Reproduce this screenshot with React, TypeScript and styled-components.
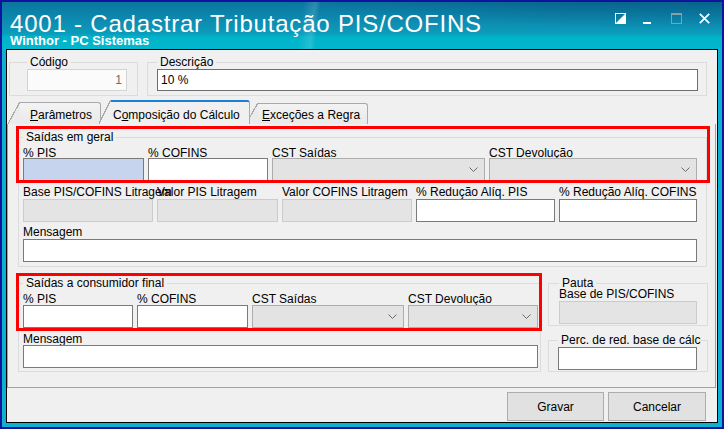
import React from 'react';
import styled, { createGlobalStyle } from 'styled-components';

const GlobalStyle = createGlobalStyle`
  html, body {
    margin: 0;
    padding: 0;
    background: #ffffff;
  }
  body {
    font-family: 'Liberation Sans', Arial, sans-serif;
    font-size: 12px;
    color: #000000;
  }
  *, *::before, *::after {
    box-sizing: border-box;
  }
`;

const Window = styled.div`
  width: 724px;
  height: 429px;
  display: flex;
  flex-direction: column;
  border: 2px solid #10149c;
  background: #0db0d0;
  overflow: hidden;
`;

const TitleBar = styled.header`
  flex: none;
  height: 47px;
  display: flex;
  justify-content: space-between;
  align-items: flex-start;
  padding: 10px 12px 0 8px;
  color: #ffffff;
  background:
    radial-gradient(circle at 118% 190%, transparent 63%, rgba(255, 255, 255, 0.14) 63.6%, transparent 65%),
    radial-gradient(120% 170% at 100% -35%, rgba(3, 60, 100, 0.55) 0%, rgba(3, 60, 100, 0) 55%),
    linear-gradient(180deg, #0b76a0 0%, #0d8bb0 40%, #0a9dbd 68%, #00b3ca 74%, #00b7cd 100%);
`;

const TitleBlock = styled.div`
  display: flex;
  flex-direction: column;
`;

const Title = styled.h1`
  margin: 0;
  font-family: 'Liberation Sans', Arial, sans-serif;
  font-weight: normal;
  font-size: 24px;
  line-height: 24px;
  letter-spacing: 0.8px;
  white-space: nowrap;
`;

const Subtitle = styled.div`
  margin-top: -2px;
  font-weight: bold;
  font-size: 13px;
  line-height: 13px;
  white-space: nowrap;
`;

const Controls = styled.div`
  display: flex;
  align-items: flex-start;
  margin-top: 1px;
`;

const ControlIcon = styled.svg<{ $ml: number }>`
  display: block;
  flex: none;
  margin-left: ${(p) => p.$ml}px;
`;

const Frame = styled.div`
  flex: 1;
  display: flex;
  padding: 0 4px 4px 4px;
  min-height: 0;
`;

const Client = styled.div`
  flex: 1;
  display: flex;
  flex-direction: column;
  border: 1px solid #000000;
  background: #f0f0f0;
`;

const HeadRow = styled.div`
  display: flex;
  gap: 9px;
  padding: 5px 0 0 2px;
`;

const Group = styled.fieldset<{ $w: number; $pad: string; $mt?: number }>`
  margin: ${(p) => p.$mt ?? 0}px 0 0 0;
  min-width: 0;
  width: ${(p) => p.$w}px;
  padding: ${(p) => p.$pad};
  border: 1px solid #dcdcdc;
`;

const Legend = styled.legend<{ $max?: number }>`
  padding: 0 3px;
  height: 14px;
  line-height: 14px;
  white-space: nowrap;
  overflow: hidden;
  max-width: ${(p) => (p.$max ? `${p.$max}px` : 'none')};
`;

const TextBox = styled.input<{ $tone: 'white' | 'focus' | 'off' | 'ro' | 'dark'; $h?: number; $align?: string }>`
  display: block;
  width: 100%;
  height: ${(p) => p.$h ?? 23}px;
  margin: 0;
  padding: 0 4px 0 3px;
  font: inherit;
  text-align: ${(p) => p.$align ?? 'left'};
  outline: none;
  color: ${(p) => (p.$tone === 'ro' ? '#6d6d6d' : '#000000')};
  border: 1px solid
    ${(p) =>
      p.$tone === 'off' ? '#cccccc' : p.$tone === 'ro' ? '#d3d3d3' : p.$tone === 'dark' ? '#6e6e6e' : '#7a7a7a'};
  background: ${(p) =>
    p.$tone === 'focus' ? '#c6d4ee' : p.$tone === 'off' ? '#e4e4e4' : p.$tone === 'ro' ? '#fbfbfb' : '#ffffff'};
`;

const Combo = styled.div`
  height: 23px;
  display: flex;
  align-items: center;
  justify-content: flex-end;
  padding-right: 6px;
  border: 1px solid #adadad;
  background: #e3e3e3;
`;

const TabStrip = styled.div`
  display: flex;
  align-items: flex-end;
  height: 24px;
  margin-top: 4px;
`;

const Tab = styled.div<{ $h: number; $ml: number; $active?: boolean }>`
  position: relative;
  z-index: ${(p) => (p.$active ? 2 : 1)};
  display: flex;
  height: ${(p) => p.$h}px;
  margin-left: ${(p) => p.$ml}px;
`;

const TabSlant = styled.span<{ $active?: boolean }>`
  flex: none;
  width: 12px;
  background: linear-gradient(
    to bottom right,
    transparent calc(50% - 0.7px),
    #a9a9a9 calc(50% - 0.7px),
    #a9a9a9 calc(50% + 0.5px),
    ${(p) => (p.$active ? '#f0f0f0' : '#ebebeb')} calc(50% + 0.5px)
  );
`;

const TabFace = styled.span<{ $w: number; $pl: number; $active?: boolean }>`
  display: flex;
  align-items: flex-end;
  width: ${(p) => p.$w}px;
  padding: 0 0 2px ${(p) => p.$pl}px;
  line-height: 13px;
  white-space: nowrap;
  border-top: ${(p) => (p.$active ? '2px solid #1a7fd6' : '1px solid #a9a9a9')};
  border-right: 1px solid #a9a9a9;
  border-top-right-radius: 3px;
  background: ${(p) => (p.$active ? '#f0f0f0' : 'linear-gradient(180deg, #f3f3f3, #e9e9e9)')};
`;

const TabPage = styled.div`
  position: relative;
  flex: none;
  height: 264px;
  margin-right: 1px;
  padding: 4px 0 0 10px;
  border: 1px solid #a0a0a0;
  border-top: none;
`;

const Highlight = styled.div<{ $x: number; $y: number; $w: number; $h: number }>`
  position: absolute;
  left: ${(p) => p.$x}px;
  top: ${(p) => p.$y}px;
  width: ${(p) => p.$w}px;
  height: ${(p) => p.$h}px;
  border: 3px solid #ff0000;
  pointer-events: none;
`;

const Row = styled.div<{ $cols: string; $mt?: number }>`
  display: grid;
  grid-template-columns: ${(p) => p.$cols};
  column-gap: 4px;
  margin-top: ${(p) => p.$mt ?? 0}px;
`;

const Field = styled.div`
  display: flex;
  flex-direction: column;
  min-width: 0;
`;

const FieldLabel = styled.label<{ $h: number; $mt?: number }>`
  display: block;
  height: ${(p) => p.$h}px;
  margin-top: ${(p) => p.$mt ?? 0}px;
  line-height: 13px;
  white-space: nowrap;
  overflow: visible;
`;

const Lower = styled.div`
  display: flex;
  align-items: flex-start;
  gap: 7px;
  margin-top: 9px;
`;

const SideColumn = styled.div`
  display: flex;
  flex-direction: column;
  gap: 7px;
`;

const ButtonBar = styled.div`
  flex: 1;
  display: flex;
  justify-content: flex-end;
  align-items: flex-start;
  gap: 4px;
  padding: 4px 11px 0 0;
`;

const Button = styled.button<{ $w: number }>`
  width: ${(p) => p.$w}px;
  height: 29px;
  margin: 0;
  padding: 0;
  font: inherit;
  color: #000000;
  border: 1px solid #adadad;
  background: #e1e1e1;
`;

type Kind = 'white' | 'focus' | 'off' | 'combo';

interface FieldSpec {
  label: string;
  kind: Kind;
}

const Chevron = () => (
  <svg width="9" height="5" viewBox="0 0 9 5">
    <polyline points="0.5,0.5 4.5,4.5 8.5,0.5" fill="none" stroke="#6a6a6a" strokeWidth="1" />
  </svg>
);

const renderField = (f: FieldSpec, labelH: number) => (
  <Field key={f.label}>
    <FieldLabel $h={labelH}>{f.label}</FieldLabel>
    {f.kind === 'combo' ? (
      <Combo>
        <Chevron />
      </Combo>
    ) : (
      <TextBox $tone={f.kind} readOnly defaultValue="" />
    )}
  </Field>
);

const geralTop: FieldSpec[] = [
  { label: '% PIS', kind: 'focus' },
  { label: '% COFINS', kind: 'white' },
  { label: 'CST Saídas', kind: 'combo' },
  { label: 'CST Devolução', kind: 'combo' },
];

const geralLitragem: FieldSpec[] = [
  { label: 'Base PIS/COFINS Litragem', kind: 'off' },
  { label: 'Valor PIS Litragem', kind: 'off' },
  { label: 'Valor COFINS Litragem', kind: 'off' },
  { label: '% Redução Alíq. PIS', kind: 'white' },
  { label: '% Redução Alíq. COFINS', kind: 'white' },
];

const consumidorTop: FieldSpec[] = [
  { label: '% PIS', kind: 'white' },
  { label: '% COFINS', kind: 'white' },
  { label: 'CST Saídas', kind: 'combo' },
  { label: 'CST Devolução', kind: 'combo' },
];

export default function App() {
  return (
    <>
      <GlobalStyle />
      <Window>
        <TitleBar>
          <TitleBlock>
            <Title>4001 - Cadastrar Tributação PIS/COFINS</Title>
            <Subtitle>Winthor - PC Sistemas</Subtitle>
          </TitleBlock>
          <Controls>
            <ControlIcon $ml={0} width="11" height="11" viewBox="0 0 11 11">
              <rect x="0.5" y="0.5" width="10" height="10" fill="none" stroke="#ffffff" />
              <polygon points="0,11 11,0 11,11" fill="#ffffff" />
            </ControlIcon>
            <ControlIcon $ml={17} width="8" height="11" viewBox="0 0 8 11">
              <rect x="0" y="9" width="8" height="2" fill="#ffffff" />
            </ControlIcon>
            <ControlIcon $ml={20} width="11" height="11" viewBox="0 0 11 11">
              <rect x="0.5" y="0.5" width="10" height="10" fill="none" stroke="#8b9ea8" />
              <rect x="0" y="0" width="11" height="2" fill="#8b9ea8" />
            </ControlIcon>
            <ControlIcon $ml={17} width="11" height="11" viewBox="0 0 11 11">
              <path d="M0.8 0.8 L10.2 10.2 M10.2 0.8 L0.8 10.2" stroke="#ffffff" strokeWidth="1.7" />
            </ControlIcon>
          </Controls>
        </TitleBar>

        <Frame>
          <Client>
            <HeadRow>
              <Group $w={129} $pad="0 10px 4px 17px">
                <Legend>Código</Legend>
                <TextBox $tone="ro" $h={22} $align="right" readOnly defaultValue="1" />
              </Group>
              <Group $w={560} $pad="0 8px 4px 9px">
                <Legend>Descrição</Legend>
                <TextBox $tone="dark" $h={22} readOnly defaultValue="10 %" />
              </Group>
            </HeadRow>

            <TabStrip>
              <Tab $h={22} $ml={1}>
                <TabSlant />
                <TabFace $w={81} $pl={10}>
                  <span>
                    <u>P</u>arâmetros
                  </span>
                </TabFace>
              </Tab>
              <Tab $h={24} $ml={-2} $active>
                <TabSlant $active />
                <TabFace $w={139} $pl={2} $active>
                  <span>
                    C<u>o</u>mposição do Cálculo
                  </span>
                </TabFace>
              </Tab>
              <Tab $h={21} $ml={-4}>
                <TabSlant />
                <TabFace $w={110} $pl={4}>
                  <span>
                    <u>E</u>xceções a Regra
                  </span>
                </TabFace>
              </Tab>
            </TabStrip>

            <TabPage>
              <Group $w={689} $pad="3px 9px 4px 4px" $mt={2}>
                <Legend>Saídas em geral</Legend>
                <Row $cols="121px 120px 213px 208px">{geralTop.map((f) => renderField(f, 11))}</Row>
                <Row $cols="130px 121px 130px 139px 138px" $mt={5}>
                  {geralLitragem.map((f) => renderField(f, 13))}
                </Row>
                <Row $cols="1fr" $mt={4}>
                  {renderField({ label: 'Mensagem', kind: 'white' }, 13)}
                </Row>
              </Group>

              <Lower>
                <Group $w={523} $pad="3px 2px 3px 4px">
                  <Legend>Saídas a consumidor final</Legend>
                  <Row $cols="110px 111px 152px 130px">{consumidorTop.map((f) => renderField(f, 12))}</Row>
                  <Row $cols="1fr" $mt={5}>
                    {renderField({ label: 'Mensagem', kind: 'white' }, 12)}
                  </Row>
                </Group>

                <SideColumn>
                  <Group $w={160} $pad="0 10px 1px 10px">
                    <Legend>Pauta</Legend>
                    <Field>
                      <FieldLabel $h={13} $mt={-2}>
                        Base de PIS/COFINS
                      </FieldLabel>
                      <TextBox $tone="off" readOnly defaultValue="" />
                    </Field>
                  </Group>
                  <Group $w={160} $pad="0 10px 1px 9px">
                    <Legend $max={143}>Perc. de red. base de cálculo</Legend>
                    <TextBox $tone="white" readOnly defaultValue="" />
                  </Group>
                </SideColumn>
              </Lower>

              <Highlight $x={8} $y={2} $w={694} $h={57} />
              <Highlight $x={8} $y={149} $w={526} $h={58} />
            </TabPage>

            <ButtonBar>
              <Button $w={97}>Gravar</Button>
              <Button $w={98}>Cancelar</Button>
            </ButtonBar>
          </Client>
        </Frame>
      </Window>
    </>
  );
}
